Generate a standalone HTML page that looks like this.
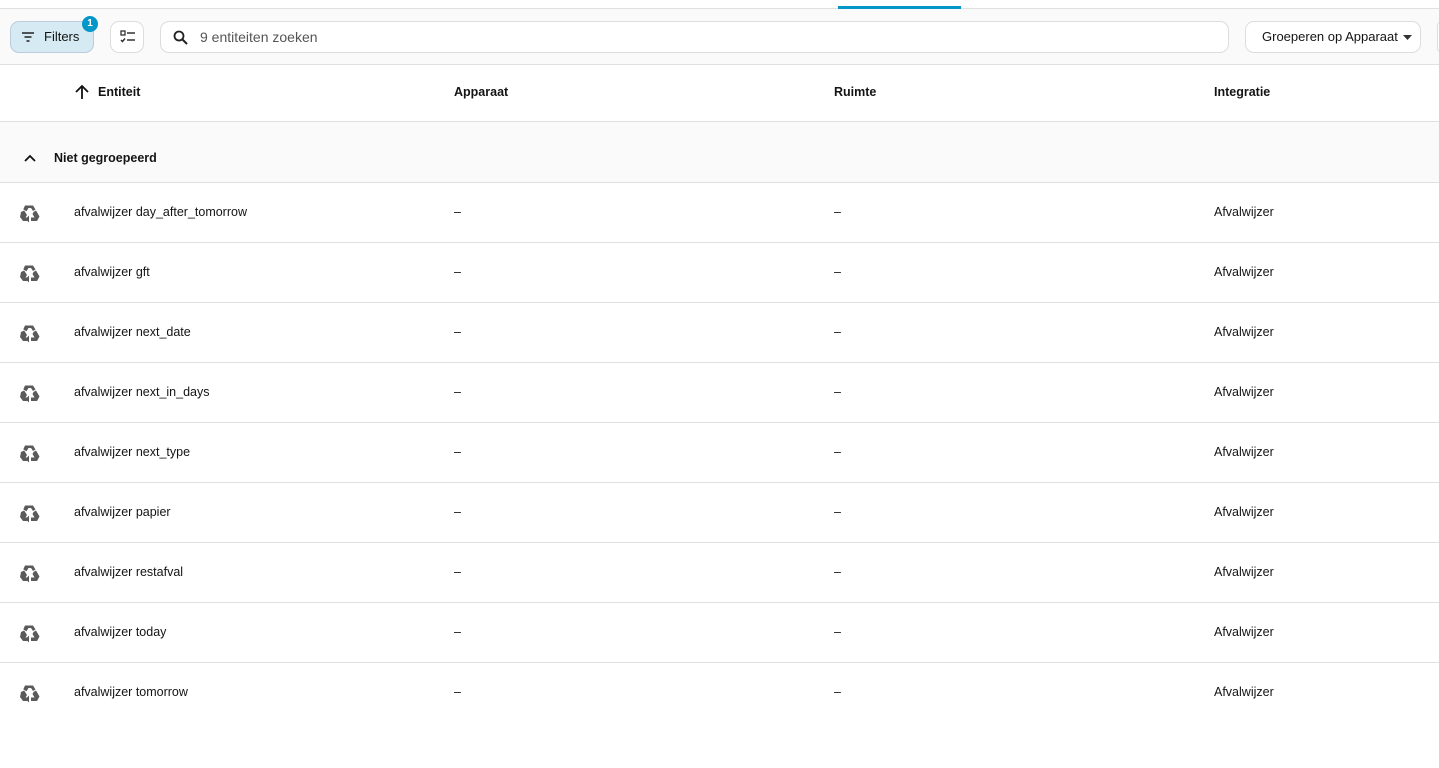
<!DOCTYPE html>
<html><head><meta charset="utf-8"><style>
*{box-sizing:border-box;margin:0;padding:0}
body{width:1439px;height:768px;overflow:hidden;background:#fff;font-family:"Liberation Sans",sans-serif;color:#141414;position:relative}
.topline{position:absolute;top:8px;left:0;right:0;height:1px;background:#e0e0e0}
.tab{position:absolute;top:6px;left:838px;width:123px;height:3px;background:#0397c9}
.bar{position:absolute;top:9px;left:0;right:0;height:56px;background:#fafafa;border-bottom:1px solid #e0e0e0}
.filters{position:absolute;left:10px;top:12px;width:84px;height:32px;border:1px solid #bcd;border-radius:9px;background:#d5eaf2;font-size:13px;line-height:30px;padding-left:33px}
.badge{position:absolute;left:82px;top:7px;width:16px;height:16px;border-radius:50%;background:#0397c9;color:#fff;font-size:10px;font-weight:bold;text-align:center;line-height:16px}
.sel{position:absolute;left:110px;top:12px;width:34px;height:32px;border:1px solid #ddd;border-radius:9px;background:#fff}
.search{position:absolute;left:160px;top:12px;width:1069px;height:32px;border:1px solid #ddd;border-radius:9px;background:#fff;font-size:14px;color:#555;line-height:30px;padding-left:39px}
.group{position:absolute;left:1245px;top:12px;width:176px;height:32px;border:1px solid #ddd;border-radius:9px;background:#fff;font-size:13px;line-height:30px;padding-left:16px}
.edge{position:absolute;left:1437px;top:12px;width:10px;height:32px;border:1px solid #ddd;border-radius:9px;background:#fff}
.hdr{position:absolute;top:65px;left:0;right:0;height:57px;border-bottom:1px solid #e0e0e0;font-size:12.5px;font-weight:bold}
.hdr span,.row span{position:absolute}
.grp{position:absolute;top:122px;left:0;right:0;height:61px;background:#fafafa;border-bottom:1px solid #e0e0e0;font-size:12.5px;font-weight:bold}
.row{position:absolute;left:0;right:0;height:60px;border-bottom:1px solid #e0e0e0;font-size:12.5px}
.row:last-child{border-bottom:none}
</style></head><body>
<div class="topline"></div><div class="tab"></div>
<div class="bar">
<div class="filters"><svg style="position:absolute;left:10px;top:9px" width="14" height="12" viewBox="0 0 14 12"><path d="M1 2h12M3.5 6h7M5.5 10h3" stroke="#222" stroke-width="1.6"/></svg>Filters</div>
<div class="badge">1</div>
<div class="sel"><svg style="position:absolute;left:9px;top:8px" width="16" height="14" viewBox="0 0 16 14"><rect x="1" y="1" width="4" height="4" fill="none" stroke="#333" stroke-width="1.3"/><path d="M7 3h8M7 10h8M1 10l1.5 1.5L5 8.5" stroke="#333" stroke-width="1.5" fill="none"/></svg></div>
<div class="search"><svg style="position:absolute;left:12px;top:8px" width="15" height="15" viewBox="0 0 15 15"><circle cx="6" cy="6" r="4.5" fill="none" stroke="#222" stroke-width="1.8"/><path d="M9.5 9.5L14 14" stroke="#222" stroke-width="2"/></svg>9 entiteiten zoeken</div>
<div class="group">Groeperen op Apparaat<svg style="position:absolute;left:157px;top:13px" width="9" height="5"><path d="M0 0h9L4.5 5z" fill="#333"/></svg></div>
<div class="edge"></div>
</div>
<div class="hdr">
<svg style="position:absolute;left:74px;top:19px" width="16" height="16" viewBox="0 0 16 16"><path d="M8 15V2M2 8l6-6 6 6" stroke="#111" stroke-width="1.8" fill="none"/></svg>
<span style="left:98px;top:20px">Entiteit</span><span style="left:454px;top:20px">Apparaat</span><span style="left:834px;top:20px">Ruimte</span><span style="left:1214px;top:20px">Integratie</span></div>
<div class="grp"><svg style="position:absolute;left:24px;top:32px" width="12" height="8" viewBox="0 0 12 8"><path d="M1 7l5-5 5 5" stroke="#111" stroke-width="1.8" fill="none"/></svg><span style="position:absolute;left:54px;top:29px">Niet gegroepeerd</span></div>
<div id="rows"></div>
<script>
var n=["day_after_tomorrow","gft","next_date","next_in_days","next_type","papier","restafval","today","tomorrow"],h="";
var ic='<svg style="position:absolute;left:18px;top:18px" width="24" height="24" viewBox="0 0 24 24"><g fill="#5a5a5a"><path d="M7 4.5h8l2.5 4-2.5 1.5-2-3h-2.5l-2 3.2-3.2-1.8z"/><path d="M3 11l3.2-1.5 2.8 4.5-1.5 2.5H11V20H5l-3-4z"/><path d="M18 9.5l3.5 6-2.5 4.5h-6v-3.5h3.5l-2-3.5 1-2z"/><path d="M11 14.5v7l-3.5-3.5z"/></g></svg>';
n.forEach(function(x,i){h+='<div class="row" style="top:'+(183+i*60)+'px">'+ic+'<span style="left:74px;top:22px">afvalwijzer '+x+'</span><span style="left:454px;top:22px">–</span><span style="left:834px;top:22px">–</span><span style="left:1214px;top:22px">Afvalwijzer</span></div>'});
document.getElementById("rows").innerHTML=h;
</script>
</body></html>
